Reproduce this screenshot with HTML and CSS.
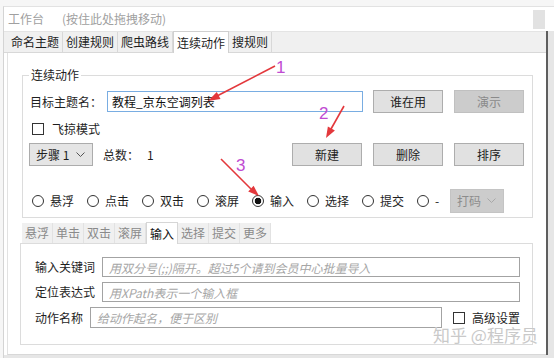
FILE: index.html
```html
<!DOCTYPE html>
<html lang="zh-CN">
<head>
  <meta charset="UTF-8" />
  <title>工作台</title>
  <link rel="stylesheet" href="styles.css">
</head>
<body>
  <div class="window">
    <div class="titlebar">
      <span>工作台</span>
      <span class="hint">(按住此处拖拽移动)</span>
      <span class="close"></span>
    </div>
    <div class="tabctl">
      <div class="tabs">
        <div class="tab">命名主题</div>
        <div class="tab">创建规则</div>
        <div class="tab">爬虫路线</div>
        <div class="tab on">连续动作</div>
        <div class="tab">搜规则</div>
      </div>
      <div class="page">
        <fieldset class="group">
          <legend>连续动作</legend>
          <div class="row row1">
            <span class="lbl">目标主题名：</span>
            <input class="target" type="text" value="教程_京东空调列表">
            <button class="btn first">谁在用</button>
            <button class="btn off">演示</button>
          </div>
          <div class="row row2">
            <span class="chk"></span>
            <span>飞掠模式</span>
          </div>
          <div class="row row3">
            <div class="step">
              <span>步骤 1</span>
              <svg width="9" height="6" viewBox="0 0 9 6"><polyline points="0.5,0.5 4.5,4.5 8.5,0.5" fill="none" stroke="#555" stroke-width="1"/></svg>
            </div>
            <span class="count">总数：</span>
            <span class="num">1</span>
            <div class="tools">
              <button class="btn">新建</button>
              <button class="btn">删除</button>
              <button class="btn">排序</button>
            </div>
          </div>
          <div class="row row4">
            <label class="radio"><span class="dot"></span>悬浮</label>
            <label class="radio"><span class="dot"></span>点击</label>
            <label class="radio"><span class="dot"></span>双击</label>
            <label class="radio"><span class="dot"></span>滚屏</label>
            <label class="radio"><span class="dot checked"></span>输入</label>
            <label class="radio"><span class="dot"></span>选择</label>
            <label class="radio"><span class="dot"></span>提交</label>
            <label class="radio short"><span class="dot"></span>-</label>
            <div class="code">
              <span>打码</span>
              <svg width="9" height="6" viewBox="0 0 9 6"><polyline points="0.5,0.5 4.5,4.5 8.5,0.5" fill="none" stroke="#a8a8a8" stroke-width="1"/></svg>
            </div>
          </div>
        </fieldset>

        <div class="subtabs">
          <div class="st">悬浮</div>
          <div class="st">单击</div>
          <div class="st">双击</div>
          <div class="st">滚屏</div>
          <div class="st on">输入</div>
          <div class="st">选择</div>
          <div class="st">提交</div>
          <div class="st">更多</div>
        </div>
        <div class="subpage">
          <div class="field">
            <span class="fl">输入关键词</span>
            <input class="box" type="text" placeholder="用双分号(;;)隔开。超过5个请到会员中心批量导入">
          </div>
          <div class="field">
            <span class="fl">定位表达式</span>
            <input class="box" type="text" placeholder="用XPath表示一个输入框">
          </div>
          <div class="field last">
            <span class="fl short">动作名称</span>
            <input class="box name" type="text" placeholder="给动作起名，便于区别">
            <span class="chk adv"></span>
            <span class="advtext">高级设置</span>
          </div>
        </div>
      </div>
    </div>
  </div>

  <div class="watermark">知乎 @程序员</div>

  <svg class="marks" width="554" height="358" viewBox="0 0 554 358">
    <g stroke="#e3383c" stroke-width="1.6" fill="#e3383c">
      <line x1="275" y1="66" x2="217" y2="96"/>
      <polygon points="208,101 220.5,99 216.8,91.9" stroke="none"/>
      <line x1="344" y1="106" x2="331" y2="129"/>
      <polygon points="326,138 334.9,130.4 327.9,126.4" stroke="none"/>
      <line x1="221" y1="159" x2="251" y2="189"/>
      <polygon points="259,196 248.2,191.5 253.6,185.7" stroke="none"/>
    </g>
    <g fill="#c04bd2" font-family="Liberation Sans, sans-serif" font-size="17">
      <text x="276" y="73">1</text>
      <text x="319" y="119">2</text>
      <text x="236" y="171">3</text>
    </g>
  </svg>
</body>
</html>
```

FILE: styles.css
```css
* { box-sizing: border-box; }
body { margin: 0; width: 554px; height: 358px; position: relative; overflow: hidden; background: #f6f6f6; font: 12px/16px "Noto Sans CJK SC", "Noto Sans", sans-serif; color: #1e1e1e; }

.window { margin: 6px 0 0 3px; height: 352px; background: #e6e6e6; border-top: 1px solid #e2e2e2; border-left: 1px solid #d4d4d4; }
.titlebar { display: flex; align-items: center; height: 24px; padding-left: 4px; background: #fff; color: #a0a0a0; }
.hint { margin-left: 18px; }
.close { width: 12px; height: 19px; margin-left: auto; margin-right: 9px; background: #e2e2e2; }

.tabctl { width: 544px; background: #fff; border-right: 2px solid #5e5e5e; }
.tabs { display: flex; align-items: flex-start; height: 22px; padding-left: 4px; background: #f0f0f0; border-top: 1px solid #e4e4e4; border-bottom: 1px solid #d8d8d8; }
.tab { padding: 0 3px; line-height: 20px; border-right: 1px solid #d8d8d8; }
.tab.on { height: 22px; margin-top: -1px; background: #fff; border: 1px solid #d0d0d0; border-bottom: none; line-height: 21px; }

.page { margin-left: 3px; padding: 14px 13px 9px 14px; background: #fff; border-left: 1px solid #e2e2e2; border-bottom: 1px solid #d8d8d8; }

.group { margin: 0; padding: 0 8px 4px 7px; border: 1px solid #dcdcdc; }
.group legend { margin-left: -1px; padding: 0 2px; line-height: 16px; color: #222; }

.row { display: flex; align-items: center; }
.row1 { height: 23px; margin-top: 7px; }
.row2 { height: 16px; margin-top: 8px; }
.row3 { height: 23px; margin-top: 6px; }
.row4 { height: 24px; margin-top: 23px; padding-left: 2px; }

.lbl { width: 77px; }
.target { width: 256px; height: 21px; padding: 0 4px; border: 1px solid #79ade2; font: inherit; color: #111; outline: none; }

.btn { width: 70px; height: 23px; margin-left: 11px; padding: 0; background: #e1e1e1; border: 1px solid #adadad; font: inherit; color: #222; }
.btn.first { margin-left: 10px; }
.btn.off { background: #cccccc; border-color: #c0c0c0; color: #8a8a8a; }

.chk { display: inline-block; width: 12px; height: 12px; margin: 0 8px 0 2px; background: #fff; border: 1px solid #333; }

.step { display: flex; align-items: center; justify-content: space-between; width: 64px; height: 23px; margin-left: -1px; padding: 0 7px 0 6px; background: #e5e5e5; border: 1px solid #acacac; }
.count { margin-left: 10px; }
.num { margin-left: 8px; }
.tools { display: flex; margin-left: auto; }

.radio { display: flex; align-items: center; width: 55px; }
.radio.short { width: 33px; }
.dot { width: 12px; height: 12px; margin-right: 6px; border: 1px solid #333; border-radius: 50%; background: #fff; }
.dot.checked { background: radial-gradient(circle, #111 0 3px, #fff 3.6px); }
.code { display: flex; align-items: center; justify-content: space-between; width: 54px; height: 24px; padding: 0 7px 0 6px; background: #cccccc; border: 1px solid #c4c4c4; color: #8c8c8c; }

.subtabs { display: flex; align-items: flex-start; height: 20px; margin-top: 5px; }
.st { padding: 0 3px; line-height: 20px; background: #f0f0f0; color: #8a8a8a; border-right: 1px solid #e2e2e2; }
.st.on { position: relative; height: 22px; margin-top: -1px; background: #fff; color: #111; border: 1px solid #d6d6d6; border-bottom: none; line-height: 21px; }

.subpage { width: 513px; margin-left: -2px; padding: 13px 12px 16px 14px; border: 1px solid #dcdcdc; }
.field { display: flex; align-items: center; height: 20px; }
.field + .field { margin-top: 5px; }
.field.last { height: 21px; }
.fl { width: 67px; }
.fl.short { width: 55px; }
.box { flex: 1; height: 20px; padding: 0 6px; border: 1px solid #a3a3a3; font: inherit; outline: none; }
.box::placeholder { color: #a6a6a6; font-style: italic; }
.box.name { flex: none; width: 352px; height: 21px; }
.chk.adv { margin: 0 7px 0 11px; }

.watermark { position: absolute; left: 433px; top: 326px; font-size: 17px; line-height: 18px; color: #c9c9c9; text-shadow: 0 0 1px #fff; }
.marks { position: absolute; left: 0; top: 0; pointer-events: none; }
```
